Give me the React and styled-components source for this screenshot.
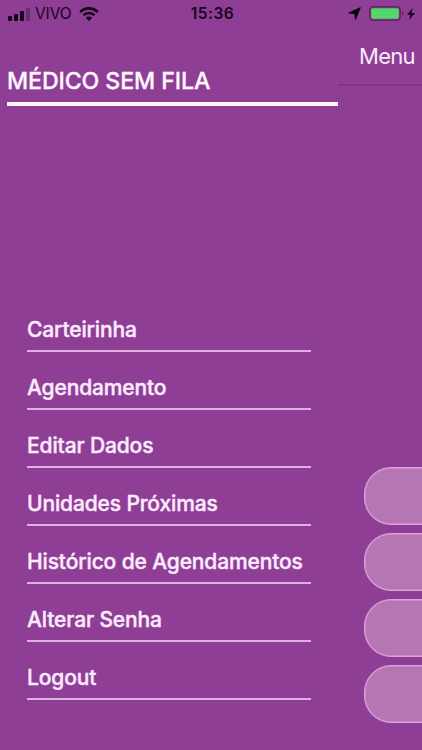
import React from 'react';
import styled, { createGlobalStyle } from 'styled-components';

const GlobalStyle = createGlobalStyle`
  * {
    box-sizing: border-box;
  }

  body {
    margin: 0;
    background: #8f3e95;
    font-family: Inter, 'Liberation Sans', sans-serif;
  }
`;

const Screen = styled.div`
  width: 422px;
  height: 750px;
  display: flex;
  flex-direction: column;
  overflow: hidden;
  background: #8f3e95;
`;

const StatusBar = styled.header`
  height: 28px;
  flex: none;
  display: grid;
  grid-template-columns: 1fr auto 1fr;
  align-items: center;
  padding: 0 7px 0 8px;
  color: #16051b;
`;

const StatusGroup = styled.div`
  display: flex;
  align-items: center;
  justify-content: ${({ $end }) => ($end ? 'flex-end' : 'flex-start')};

  svg {
    display: block;
    flex: none;
  }
`;

const Carrier = styled.span`
  margin: 0 8px 0 5px;
  font-size: 15.5px;
  line-height: 28px;
  letter-spacing: -0.1px;
`;

const Clock = styled.time`
  margin-left: 2px;
  font-size: 15.5px;
  font-weight: 600;
  line-height: 28px;
  letter-spacing: 0.5px;
`;

const Body = styled.div`
  flex: 1;
  display: flex;
  min-height: 0;
`;

const Drawer = styled.aside`
  width: 338px;
  flex: none;
  display: flex;
  flex-direction: column;
  justify-content: space-between;
  padding: 37px 0 50px 7px;
`;

const DrawerTitle = styled.h1`
  height: 41px;
  margin: 0;
  padding-top: 1px;
  border-bottom: 4px solid #fff5ff;
  color: #fff5ff;
  font-size: 23.2px;
  font-weight: 500;
  line-height: 31px;
  letter-spacing: -0.12px;
  white-space: nowrap;
  -webkit-text-stroke: 0.3px #fff5ff;
`;

const MenuList = styled.nav`
  width: 284px;
  margin-left: 20px;
`;

const MenuItem = styled.a`
  display: block;
  height: 58px;
  padding-top: 22px;
  border-bottom: 2px solid #dfb2e2;
  color: #fdeaff;
  font-size: 21px;
  font-weight: 500;
  line-height: 28px;
  letter-spacing: -0.13px;
  white-space: nowrap;
  -webkit-text-stroke: 0.4px #fdeaff;
`;

const Page = styled.main`
  flex: 1;
  display: flex;
  flex-direction: column;
  justify-content: space-between;
  min-width: 0;
  overflow: hidden;
`;

const PageHeader = styled.div`
  height: 58px;
  padding: 13px 0 0 21px;
  border-bottom: 2px solid #833287;
  color: #fbeaff;
  font-size: 22px;
  line-height: 30px;
  letter-spacing: -0.7px;
`;

const PageActions = styled.div`
  display: flex;
  flex-direction: column;
  gap: 8px;
  padding: 0 0 27px 26px;
`;

const PageButton = styled.button`
  width: 345px;
  height: 58px;
  border: 1px solid #dda0dc;
  border-radius: 27px;
  background: #b676b4;
  box-shadow: inset 0 0 0 0.5px #dda0dc;
`;

const items = [
  'Carteirinha',
  'Agendamento',
  'Editar Dados',
  'Unidades Próximas',
  'Histórico de Agendamentos',
  'Alterar Senha',
  'Logout'
];

const actions = [1, 2, 3, 4];

function SignalIcon() {
  return (
    <svg width="22" height="13" viewBox="0 0 22 13" fill="currentColor">
      <rect x="0" y="8" width="4" height="5" rx="1" />
      <rect x="6" y="6" width="4" height="7" rx="1" />
      <rect x="12" y="3" width="4" height="10" rx="1" />
      <rect x="18" y="0" width="4" height="13" rx="1" opacity="0.3" />
    </svg>
  );
}

function WifiIcon() {
  return (
    <svg width="20" height="14" viewBox="0 0 20 14" fill="none" stroke="currentColor">
      <path d="M1.2 4.9C6.1.3 13.9.3 18.8 4.9" strokeWidth="2.7" />
      <path d="M4.4 8.2c3.1-2.9 8.1-2.9 11.2 0" strokeWidth="2.5" />
      <path d="M6.8 10.8c1.8-1.7 4.6-1.7 6.4 0L10 14z" fill="currentColor" stroke="none" />
    </svg>
  );
}

function LocationIcon() {
  return (
    <svg width="13" height="13" viewBox="0 0 13 13" fill="#000">
      <path d="M12.2.3c.4-.2.7.1.5.5L8 12.3c-.2.5-.9.4-1-.1L6.3 7 .9 6.4c-.5 0-.6-.7-.1-.9z" />
    </svg>
  );
}

function BatteryIcon() {
  return (
    <svg width="36" height="15" viewBox="0 0 36 15">
      <rect x="0.8" y="0.8" width="30.4" height="13.4" rx="3.4" fill="none" stroke="#632367" strokeWidth="1.5" />
      <rect x="2.2" y="2.2" width="27.6" height="10.6" rx="1.8" fill="#50d868" />
      <path d="M33 5c2.2.8 2.2 4.2 0 5z" fill="#632367" />
    </svg>
  );
}

function BoltIcon() {
  return (
    <svg width="8" height="12" viewBox="0 0 8 12" fill="currentColor">
      <path d="M5.6 0 0 6.9h3.3L2 12l6-7.1H4.6z" />
    </svg>
  );
}

const LocationSlot = styled.span`
  margin: -1px 8px 0 0;
`;

const BatterySlot = styled.span`
  margin: -1px 2px 0 0;
`;

function App() {
  return (
    <>
      <GlobalStyle />
      <Screen>
        <StatusBar>
          <StatusGroup>
            <SignalIcon />
            <Carrier>VIVO</Carrier>
            <WifiIcon />
          </StatusGroup>
          <Clock>15:36</Clock>
          <StatusGroup $end>
            <LocationSlot>
              <LocationIcon />
            </LocationSlot>
            <BatterySlot>
              <BatteryIcon />
            </BatterySlot>
            <BoltIcon />
          </StatusGroup>
        </StatusBar>
        <Body>
          <Drawer>
            <DrawerTitle>MÉDICO SEM FILA</DrawerTitle>
            <MenuList>
              {items.map((label) => (
                <MenuItem key={label}>{label}</MenuItem>
              ))}
            </MenuList>
          </Drawer>
          <Page>
            <PageHeader>Menu</PageHeader>
            <PageActions>
              {actions.map((id) => (
                <PageButton key={id} />
              ))}
            </PageActions>
          </Page>
        </Body>
      </Screen>
    </>
  );
}

export default App;
